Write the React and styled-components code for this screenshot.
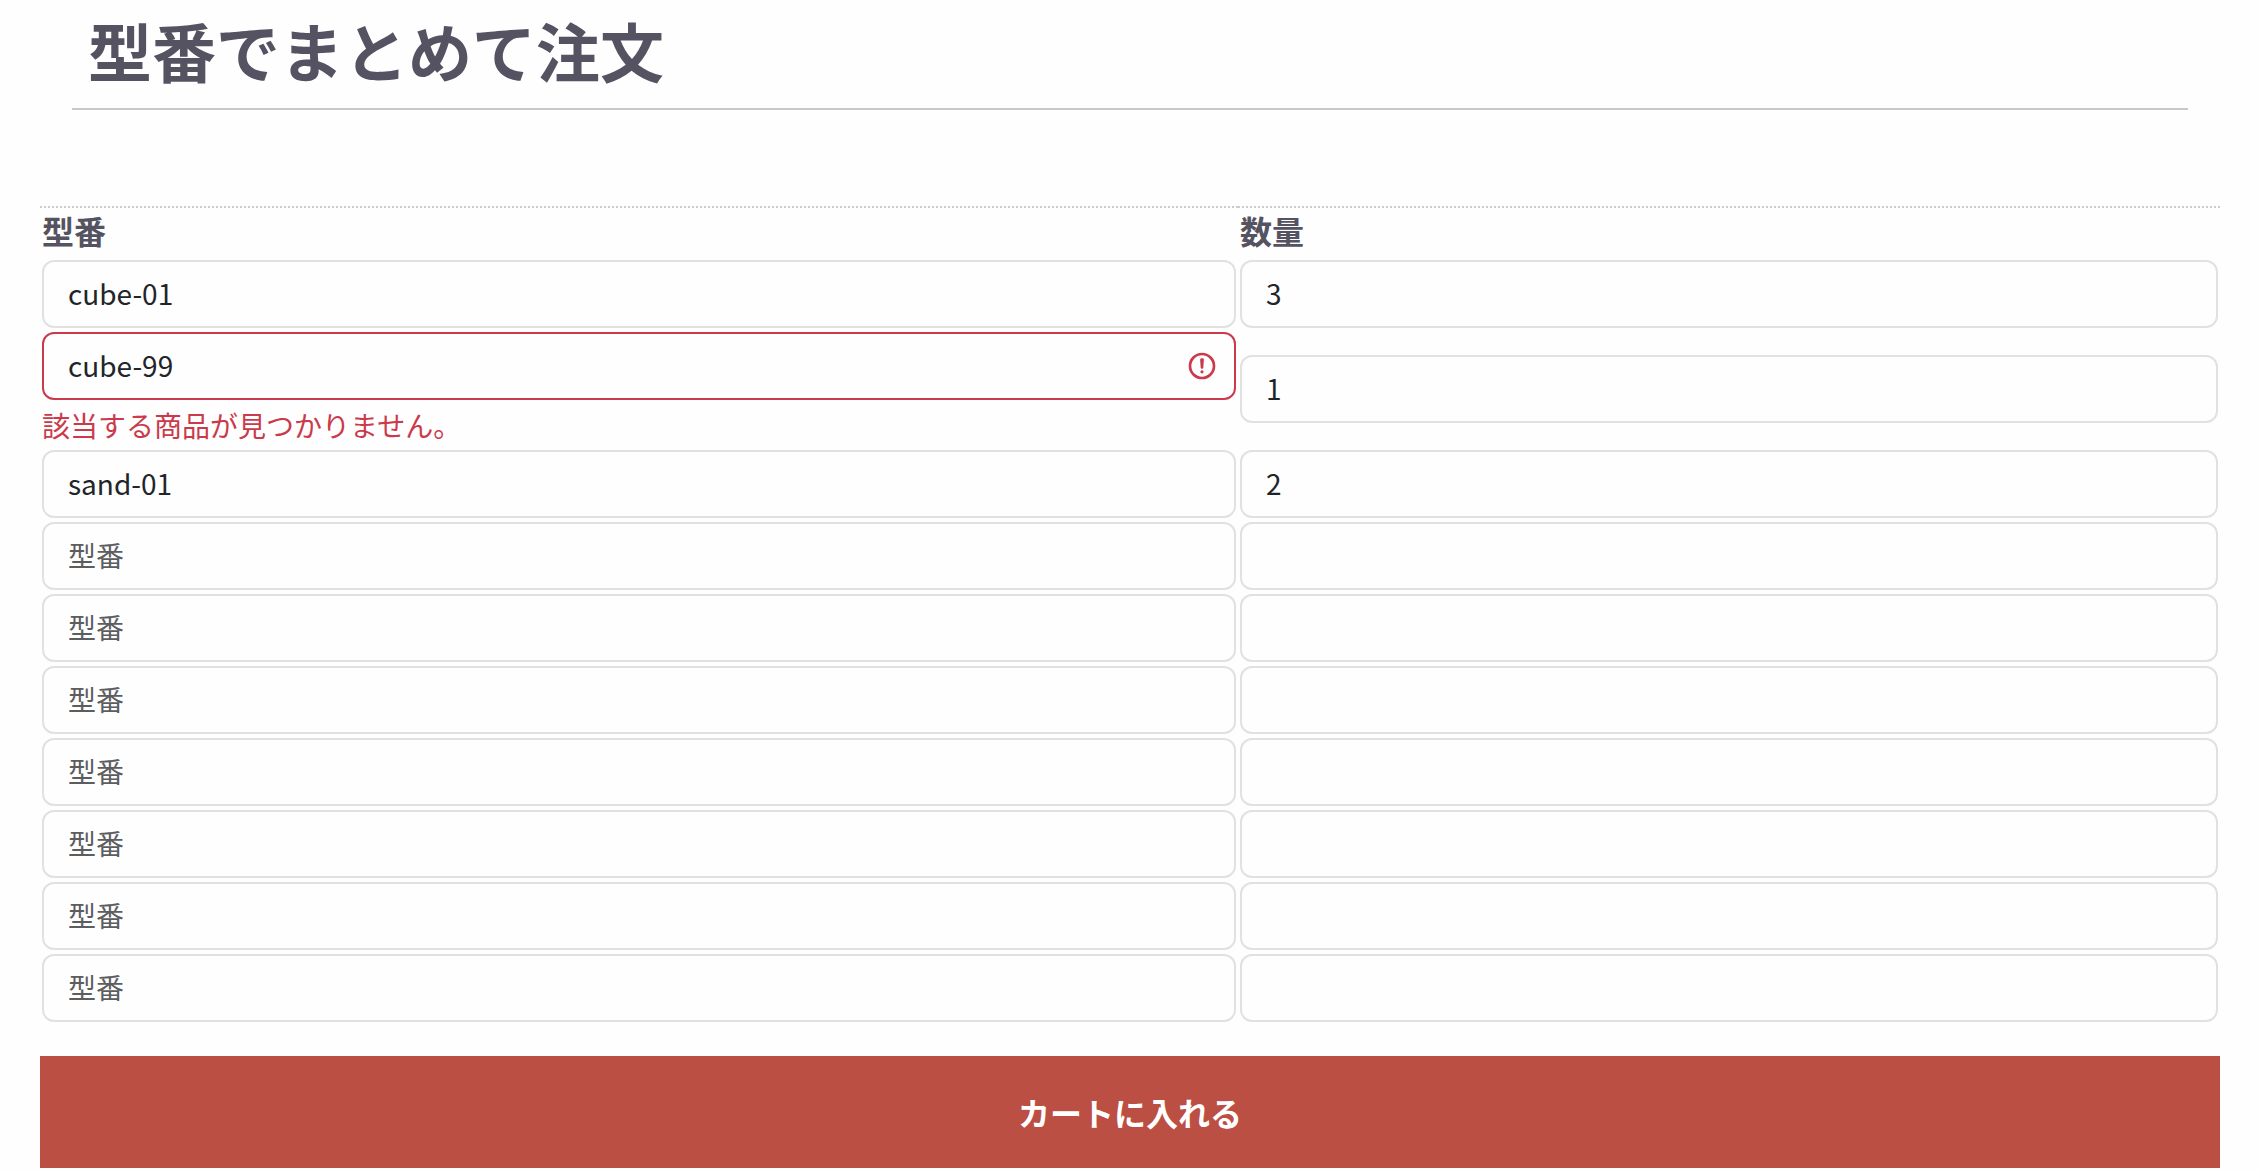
import React, { useState } from "react";
import styled, { createGlobalStyle } from "styled-components";

const GlobalStyle = createGlobalStyle`
  *, *::before, *::after { box-sizing: border-box; }
  body {
    margin: 0;
    background: #fefefe;
    color: #212529;
    font-family: "Noto Sans CJK JP", "Noto Sans", sans-serif;
    font-size: 28px;
    line-height: 42px;
  }
`;

const PageHeader = styled.header`
  margin: 0 72px 96px;
  padding: 16px 16px 26px;
  border-bottom: 2px solid #c9c9c9;
`;

const Title = styled.h1`
  margin: 0;
  color: #555362;
  font-size: 64px;
  font-weight: 700;
  line-height: 66px;
`;

const OrderForm = styled.form`
  display: flex;
  flex-direction: column;
  gap: 32px;
  margin: 0 40px;
`;

const OrderTable = styled.table`
  width: 100%;
  table-layout: fixed;
  border-spacing: 0;
`;

const HeadCell = styled.th`
  width: ${(p) => p.$width};
  padding: 1px 2px 7px;
  border-top: 2px dotted #cccccc;
  color: #555362;
  font-size: 32px;
  font-weight: 700;
  text-align: left;
`;

const Cell = styled.td`
  padding: 2px;
  vertical-align: middle;
`;

const Field = styled.div`
  position: relative;
`;

const TextInput = styled.input`
  display: block;
  width: 100%;
  height: 68px;
  padding: 0 ${(p) => (p.$invalid ? "72px" : "24px")} 2px 24px;
  border: 2px solid ${(p) => (p.$invalid ? "#cb3a4b" : "#dfe1e2")};
  border-radius: 12px;
  outline: none;
  background: #fefefe;
  color: #212529;
  font: inherit;

  &::placeholder {
    color: #5c5d5f;
    opacity: 1;
  }
`;

const ErrorIcon = styled.svg`
  position: absolute;
  top: 18px;
  right: 18px;
  width: 32px;
  height: 32px;
  pointer-events: none;
`;

const ErrorMessage = styled.div`
  margin-top: 4px;
  color: #cb3a4b;
`;

const SubmitButton = styled.button`
  width: 100%;
  height: 112px;
  padding: 0 24px;
  border: 0;
  background: #bc4f43;
  color: #ffffff;
  font: inherit;
  font-size: 32px;
  font-weight: 700;
  cursor: pointer;
`;

const initialRows = [
  { code: "cube-01", quantity: "3" },
  { code: "cube-99", quantity: "1", error: "該当する商品が見つかりません。" },
  { code: "sand-01", quantity: "2" },
  ...Array.from({ length: 7 }, () => ({ code: "", quantity: "" })),
];

function OrderRow({ index, row, onChange }) {
  const errorId = `code-error-${index}`;
  return (
    <tr>
      <Cell>
        <Field>
          <TextInput
            type="text"
            aria-labelledby="code-heading"
            aria-invalid={Boolean(row.error)}
            aria-describedby={row.error ? errorId : undefined}
            placeholder="型番"
            value={row.code}
            $invalid={Boolean(row.error)}
            onChange={(e) => onChange(index, { code: e.target.value, error: undefined })}
          />
          {row.error && (
            <ErrorIcon viewBox="0 0 12 12" fill="none" stroke="#cb3a4b" aria-hidden="true">
              <circle cx="6" cy="6" r="4.5" />
              <path strokeLinejoin="round" d="M5.8 3.6h.4L6 6.5z" />
              <circle cx="6" cy="8.2" r=".6" fill="#cb3a4b" stroke="none" />
            </ErrorIcon>
          )}
        </Field>
        {row.error && <ErrorMessage id={errorId}>{row.error}</ErrorMessage>}
      </Cell>
      <Cell>
        <TextInput
          type="text"
          inputMode="numeric"
          aria-labelledby="quantity-heading"
          value={row.quantity}
          onChange={(e) => onChange(index, { quantity: e.target.value })}
        />
      </Cell>
    </tr>
  );
}

export default function App() {
  const [rows, setRows] = useState(initialRows);
  const updateRow = (index, patch) =>
    setRows((current) => current.map((row, i) => (i === index ? { ...row, ...patch } : row)));

  return (
    <>
      <GlobalStyle />
      <PageHeader>
        <Title>型番でまとめて注文</Title>
      </PageHeader>
      <OrderForm lang="ja" onSubmit={(e) => e.preventDefault()}>
        <OrderTable>
          <thead>
            <tr>
              <HeadCell id="code-heading" scope="col" $width="54.95%">型番</HeadCell>
              <HeadCell id="quantity-heading" scope="col" $width="45.05%">数量</HeadCell>
            </tr>
          </thead>
          <tbody>
            {rows.map((row, index) => (
              <OrderRow key={index} index={index} row={row} onChange={updateRow} />
            ))}
          </tbody>
        </OrderTable>
        <SubmitButton type="submit">カートに入れる</SubmitButton>
      </OrderForm>
    </>
  );
}
